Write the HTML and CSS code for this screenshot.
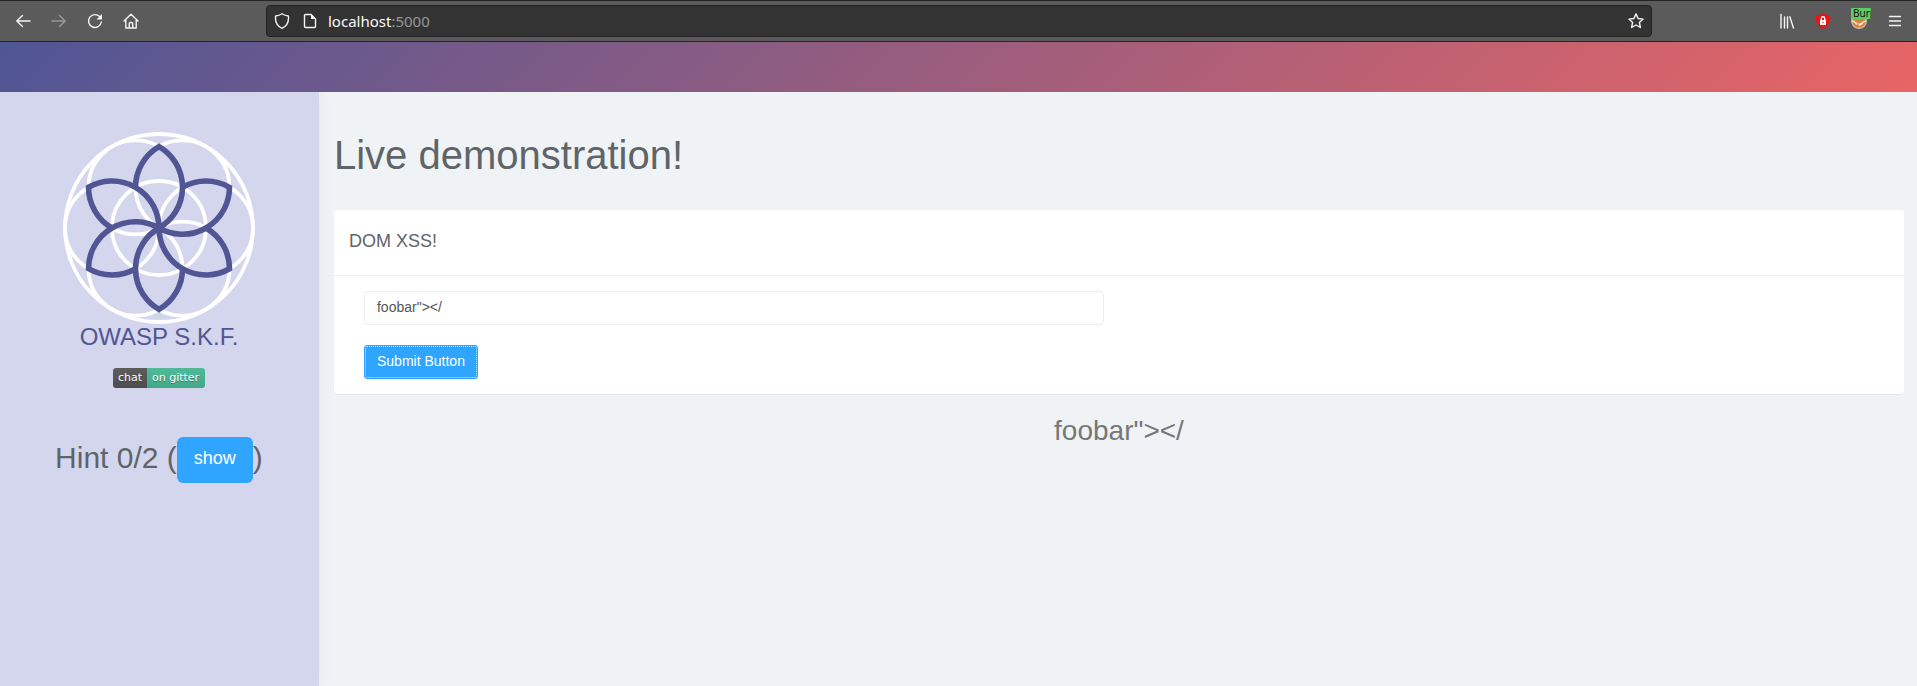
FILE: index.html
```html
<!DOCTYPE html>
<html lang="en">
<head>
<meta charset="utf-8">
<title>OWASP S.K.F. - DOM XSS</title>
<link rel="stylesheet" href="styles.css">
</head>
<body>
<header class="toolbar">
  <nav class="tools" aria-label="Navigation">
    <button class="tool" type="button" aria-label="Back"><svg width="16" height="16" viewBox="0 0 16 16"><path d="M15 8H2M7.500 2.500L1.800 8l5.700 5.500"/></svg></button>
    <button class="tool dim" type="button" aria-label="Forward"><svg width="16" height="16" viewBox="0 0 16 16"><path d="M1 8h13M8.500 2.500L14.200 8l-5.700 5.500"/></svg></button>
    <button class="tool" type="button" aria-label="Reload"><svg width="16" height="16" viewBox="0 0 16 16"><path d="M12.600 3.600A6.400 6.400 0 1 0 14.300 9"/><path class="solid" d="M15 1v5.500H9.500z"/></svg></button>
    <button class="tool" type="button" aria-label="Home"><svg width="16" height="16" viewBox="0 0 16 16"><path d="M1 8l7-6.800L15 8M2.800 7v8h10.400V7M6.300 15v-4.500q0-1 1-1h1.400q1 0 1 1V15"/></svg></button>
  </nav>
  <div class="urlbar">
    <svg class="glyph" width="16" height="16" viewBox="0 0 16 16"><path d="M8 .8C6 2.200 4 2.800 1.600 3 1 8.500 2.800 13 8 15.300 13.200 13 15 8.500 14.400 3 12 2.800 10 2.200 8 .8z"/></svg>
    <svg class="glyph" width="16" height="16" viewBox="0 0 16 16"><path d="M9 1.500H3.500q-1 0-1 1v11q0 1 1 1h9q1 0 1-1V6z"/><path class="solid" d="M9 1l5 5H9z"/></svg>
    <div class="url">localhost<span class="port">:5000</span></div>
    <svg class="glyph star" width="16" height="16" viewBox="0 0 16 16"><path d="M8 .9l2.100 4.600 5 .6-3.700 3.400 1 5L8 12l-4.400 2.500 1-5L.9 6.100l5-.6z"/></svg>
  </div>
  <div class="tools tools-end">
    <button class="tool" type="button" aria-label="Library"><svg width="16" height="16" viewBox="0 0 16 16"><path d="M2 1.500v13.500M5.500 4v11M8.500 4v11M10.800 3.800L14.500 15"/></svg></button>
    <button class="tool" type="button" aria-label="Lock extension"><svg width="16" height="16" viewBox="0 0 16 16"><path fill="#ed1414" stroke="none" d="M8 0c2 1.600 4.500 2.200 7.300 2.400C15.800 8.500 13.500 13.500 8 16 2.500 13.500.2 8.500.7 2.400 3.500 2.200 6 1.600 8 0z"/><path fill="#fff" stroke="none" d="M5 7h6v5H5z"/><path stroke="#fff" d="M6.300 7V5.500a1.700 1.700 0 0 1 3.400 0V7"/><circle cx="8" cy="9.500" r=".7" fill="#d11" stroke="none"/></svg></button>
    <button class="tool proxy" type="button" aria-label="Proxy"><svg width="16" height="16" viewBox="0 0 16 16"><circle cx="8" cy="8" r="7.300" fill="#d9853b" stroke="#c9b9a5"/><path stroke="#f3e7d8" d="M1.500 8q3 1 4 3M14.500 8q-3 1-4 3"/><path fill="#fff" stroke="none" d="M5 9l3 2 4-2-3 4z"/></svg><span class="tag">Burp</span></button>
    <button class="tool" type="button" aria-label="Menu"><svg width="16" height="16" viewBox="0 0 16 16"><path d="M2.500 3.500h11M2.500 8h11M2.500 12.500h11"/></svg></button>
  </div>
</header>
<div class="banner"></div>
<div class="page">
  <aside class="sidebar">
    <svg class="logo" viewBox="-96 -96 192 192" role="img" aria-label="OWASP S.K.F. logo">
      <defs><path id="petal" d="M-23.500-40.700A47 47 0 0 1 0-81.400 47 47 0 0 1 0 0"/></defs>
      <g fill="none" stroke="#fff" stroke-width="3.800">
        <circle r="94"/><circle r="47"/>
        <circle cx="47" r="47"/><circle cx="-47" r="47"/>
        <circle cx="23.500" cy="-40.700" r="47"/><circle cx="-23.500" cy="-40.700" r="47"/>
        <circle cx="23.500" cy="40.700" r="47"/><circle cx="-23.500" cy="40.700" r="47"/>
      </g>
      <g fill="none" stroke="#515594" stroke-width="5.600">
        <use href="#petal"/><use href="#petal" transform="rotate(60)"/><use href="#petal" transform="rotate(120)"/>
        <use href="#petal" transform="rotate(180)"/><use href="#petal" transform="rotate(240)"/><use href="#petal" transform="rotate(300)"/>
      </g>
    </svg>
    <div class="brand">OWASP S.K.F.</div>
    <a class="badge" href="#"><span class="badge-left">chat</span><span class="badge-right">on gitter</span></a>
    <h2 class="hint">Hint 0/2 (<button class="show" type="button">show</button>)</h2>
  </aside>
  <main class="main">
    <h1 class="title">Live demonstration!</h1>
    <section class="card">
      <h2 class="card-title">DOM XSS!</h2>
      <form class="form">
        <input class="field" type="text" aria-label="Input" value="foobar&quot;&gt;&lt;/">
        <button class="submit" type="button">Submit Button</button>
      </form>
    </section>
    <p class="result">foobar"&gt;&lt;/</p>
  </main>
</div>
</body>
</html>
```
FILE: styles.css
```css
* { box-sizing: border-box; }
body {
  margin: 0;
  min-height: 100vh;
  display: flex;
  flex-direction: column;
  font-family: "Liberation Sans", Arial, sans-serif;
  font-size: 14px;
  color: #5f6468;
  background: #eff3f6;
}
button { font-family: inherit; cursor: pointer; }

.toolbar {
  display: flex;
  align-items: center;
  height: 42px;
  background: #5b5b5b;
  border-top: 1px solid #232323;
  border-bottom: 1px solid #232323;
}
.tools { display: flex; width: 266px; padding: 0 4px 0 5px; }
.tools-end { width: 265px; justify-content: flex-end; }
.tool {
  position: relative;
  display: flex;
  align-items: center;
  justify-content: center;
  width: 36px;
  height: 32px;
  padding: 0;
  border: 0;
  background: none;
}
.tool svg, .glyph { fill: none; stroke: #f4f4f4; stroke-width: 1.4; stroke-linejoin: round; stroke-linecap: round; }
.tool .solid, .glyph .solid { fill: #f4f4f4; stroke: none; }
.dim { opacity: 0.4; }
.tag {
  position: absolute;
  top: 3px;
  left: 10px;
  width: 20px;
  height: 11px;
  padding-left: 2px;
  overflow: hidden;
  border-radius: 1px;
  background: #5fcb62;
  color: #111;
  font: 10px/11px "Noto Sans", sans-serif;
  text-align: left;
}
.urlbar {
  flex: 1;
  display: flex;
  align-items: center;
  gap: 12px;
  height: 32px;
  padding: 0 7px;
  border: 1px solid #222;
  border-radius: 4px;
  background: #333;
}
.glyph { flex: none; }
.url { flex: 1; margin-left: -2px; font: 15px/20px "Noto Sans", sans-serif; color: #f9f9fa; }
.port { color: #969696; }

.banner { height: 50px; background: linear-gradient(135deg, #4f5695, #e86565); }

.page { flex: 1; display: flex; }
.sidebar {
  position: relative;
  flex: none;
  width: 16.64%;
  display: flex;
  flex-direction: column;
  align-items: center;
  padding: 40px 1px 0 0;
  background: #d4d6ed;
  box-shadow: 0 0 15px rgba(0, 0, 0, 0.06);
  clip-path: inset(0 -16px 0 0);
}
.logo { width: 192px; height: 192px; }
.brand { font-size: 24px; line-height: 26px; color: #515594; }
.badge {
  display: flex;
  margin-top: 18px;
  border-radius: 3px;
  overflow: hidden;
  font: 11px/20px "DejaVu Sans", sans-serif;
  color: #fff;
  text-decoration: none;
  text-shadow: 0 1px 0 rgba(1, 1, 1, 0.3);
}
.badge-left { width: 34px; padding-left: 5px; background: linear-gradient(#5d5d5d, #4d4d4d); }
.badge-right { width: 58px; padding-left: 5px; background: linear-gradient(#50ba98, #42a888); }
.hint { margin: 47px 0 0; font-size: 30px; font-weight: 400; line-height: 46px; }
.show {
  height: 46px;
  padding: 0 17px 4px;
  border: 0;
  border-radius: 6px;
  background: #30a5ff;
  color: #fff;
  font-size: 18px;
  vertical-align: middle;
}

.main { flex: 1; min-width: 0; padding: 41px 13px 0 15px; }
.title { margin: 0; font-size: 40px; font-weight: 400; line-height: 44px; }
.card {
  margin-top: 33px;
  border-radius: 4px;
  background: #fff;
  box-shadow: 0 1px 1px rgba(0, 0, 0, 0.05);
}
.card-title {
  margin: 0;
  padding: 9px 15px 11px;
  border-bottom: 1px solid #eee;
  font-size: 18px;
  font-weight: 400;
  line-height: 45px;
}
.form {
  display: flex;
  flex-direction: column;
  align-items: flex-start;
  gap: 20px;
  padding: 15px 30px;
}
.field {
  width: 49%;
  height: 34px;
  padding: 0 12px 2px;
  border: 1px solid #eee;
  border-radius: 4px;
  background: #fff;
  color: #555;
  font: inherit;
}
.submit {
  height: 34px;
  padding: 0 12px 3px;
  border: 1px solid #30a5ff;
  border-radius: 3px;
  outline: 1px dotted #cce8ff;
  outline-offset: -2px;
  background: #30a5ff;
  color: #fff;
  font-size: 14px;
}
.result { margin: 19px 0 0; text-align: center; font-size: 28px; line-height: 36px; color: #777; }
```
